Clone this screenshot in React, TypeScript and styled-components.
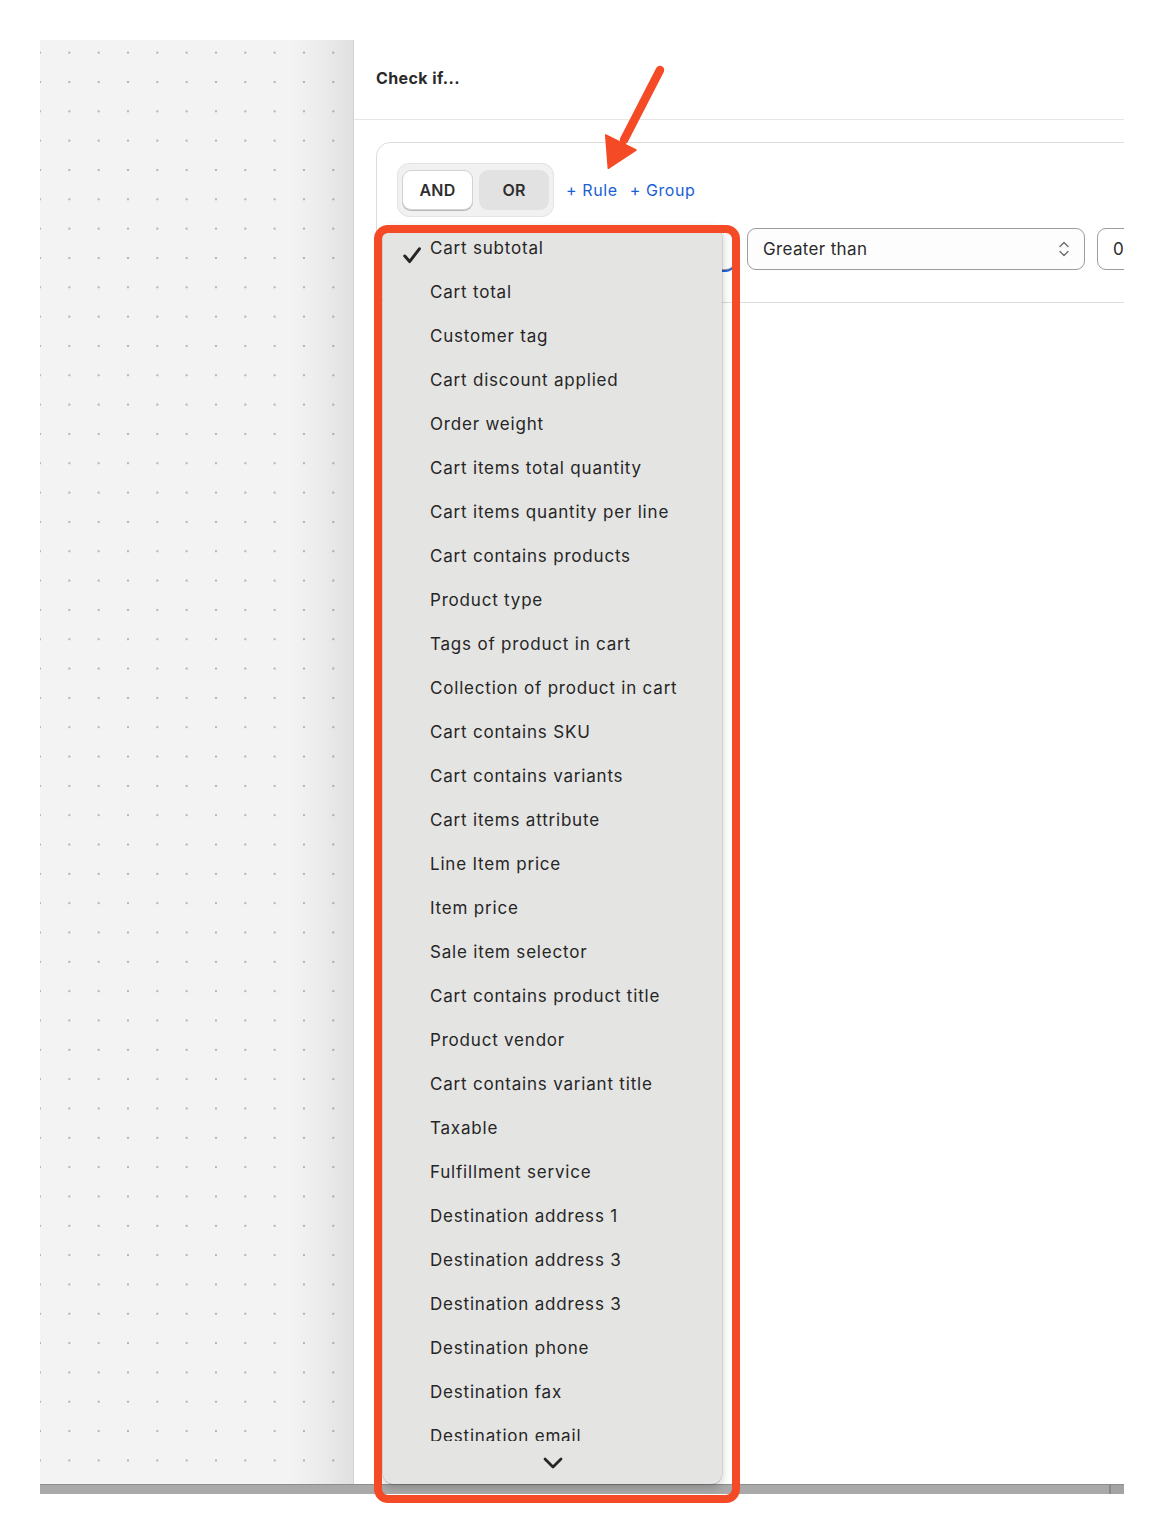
import React from 'react';
import styled, { createGlobalStyle } from 'styled-components';

const Global = createGlobalStyle`
  html, body { margin: 0; padding: 0; background: #ffffff; }
  body {
    font-family: Inter, "Noto Sans", "Liberation Sans", sans-serif;
    color: #2b2b2b;
    -webkit-font-smoothing: antialiased;
  }
`;

const Page = styled.div`
  padding: 40px;
`;

const Frame = styled.div`
  position: relative;
  width: 1084px;
  height: 1454px;
  display: flex;
  flex-direction: column;
`;

const Main = styled.div`
  flex: 1;
  display: flex;
  min-height: 0;
`;

const Canvas = styled.div`
  width: 313px;
  flex-shrink: 0;
  background-color: #f3f3f3;
  background-image:
    linear-gradient(to right, rgba(0, 0, 0, 0) 80%, rgba(0, 0, 0, 0.03) 90%, rgba(0, 0, 0, 0.08) 100%),
    radial-gradient(circle, #b3b3b3 0.95px, rgba(0, 0, 0, 0) 1.35px);
  background-size: 100% 100%, 29.33px 29.33px;
  background-position: 0 0, -14.67px -2px;
`;

const Panel = styled.div`
  flex: 1;
  min-width: 0;
  background: #ffffff;
  border-left: 1px solid #d2d2d2;
  overflow: hidden;
  display: flex;
  flex-direction: column;
`;

const Header = styled.div`
  height: 80px;
  flex-shrink: 0;
  display: flex;
  align-items: center;
  padding: 0 0 4px 22px;
  box-sizing: border-box;
  border-bottom: 1px solid #e6e6e6;
  font-size: 16px;
  font-weight: 700;
  letter-spacing: 0.4px;
  color: #2a2a2a;
`;

const Body = styled.div`
  padding: 22px 0 0 22px;
`;

const Card = styled.div`
  width: 900px;
  border: 1px solid #dcdcdc;
  border-radius: 14px;
  padding: 20px 20px 32px 20px;
  background: #ffffff;
`;

const Toolbar = styled.div`
  display: flex;
  align-items: center;
  gap: 12px;
`;

const Segmented = styled.div`
  display: flex;
  gap: 6px;
  padding: 6px 4px;
  height: 54px;
  box-sizing: border-box;
  background: #f1f1f1;
  border: 1px solid #e3e3e3;
  border-radius: 12px;
`;

const SegButton = styled.div<{ $active?: boolean }>`
  width: ${p => (p.$active ? 71 : 70)}px;
  height: 40px;
  box-sizing: border-box;
  display: flex;
  align-items: center;
  justify-content: center;
  font-size: 16px;
  font-weight: 600;
  letter-spacing: 0.2px;
  color: #2e2e2e;
  border-radius: 9px;
  background: ${p => (p.$active ? '#ffffff' : '#e2e2e2')};
  border: ${p => (p.$active ? '1px solid #d2d2d2' : '1px solid transparent')};
  box-shadow: ${p => (p.$active ? '0 1px 0 #b8b8b8' : 'none')};
`;

const LinkButton = styled.span`
  font-size: 16px;
  color: #1a5fd6;
  letter-spacing: 0.6px;
`;

const FieldRow = styled.div`
  display: flex;
  gap: 12px;
  margin-top: 11px;
`;

const Select = styled.div<{ $focused?: boolean }>`
  width: 338px;
  height: 42px;
  box-sizing: border-box;
  flex-shrink: 0;
  display: flex;
  align-items: center;
  justify-content: space-between;
  padding: 0 14px 0 15px;
  border: 1px solid #9c9c9c;
  border-radius: 9px;
  background: #fdfdfd;
  font-size: 17px;
  letter-spacing: 0.35px;
  color: #2b2b2b;
  box-shadow: ${p => (p.$focused ? '0 2px 0 #1f63d8, 0 -5px 0 -2px #e4e4e4' : 'none')};
`;

const NumberInput = styled.div`
  width: 120px;
  height: 42px;
  box-sizing: border-box;
  display: flex;
  align-items: center;
  padding-left: 15px;
  border: 1px solid #9c9c9c;
  border-radius: 9px;
  font-size: 17px;
  color: #2b2b2b;
`;

const ScrollBar = styled.div`
  height: 10px;
  flex-shrink: 0;
  display: flex;
  background: #a9a9a9;
  border-top: 1px solid #8d8d8d;
  box-sizing: border-box;
`;

const ScrollTrack = styled.div`
  flex: 1;
`;

const ScrollCorner = styled.div`
  width: 13px;
  border-left: 2px solid #8a8a8a;
  background: #a3a3a3;
`;

const Menu = styled.div`
  position: absolute;
  left: 343px;
  top: 186px;
  width: 339px;
  height: 1258px;
  background: #e4e4e3;
  border-radius: 10px;
  box-shadow: 0 0 0 0.5px rgba(0, 0, 0, 0.18), 0 3px 10px rgba(0, 0, 0, 0.22);
  display: flex;
  flex-direction: column;
  overflow: hidden;
  z-index: 2;
`;

const MenuList = styled.div`
  height: 1215px;
  overflow: hidden;
  flex-shrink: 0;
`;

const MenuItem = styled.div`
  height: 44px;
  display: grid;
  grid-template-columns: 47px 1fr;
  align-items: center;
  font-size: 17px;
  letter-spacing: 0.8px;
  color: #262626;
  white-space: nowrap;
`;

const CheckSlot = styled.div`
  display: flex;
  padding-left: 20px;
  padding-top: 14px;
`;

const MenuFooter = styled.div`
  flex: 1;
  display: flex;
  align-items: center;
  justify-content: center;
`;

const Highlight = styled.div`
  position: absolute;
  left: 334px;
  top: 185px;
  width: 366px;
  height: 1278px;
  box-sizing: border-box;
  border: 8px solid #f44a26;
  border-radius: 14px;
  z-index: 3;
  pointer-events: none;
`;

const ArrowSvg = styled.svg`
  position: absolute;
  left: 560px;
  top: 20px;
  z-index: 3;
`;

const items = [
  'Cart subtotal',
  'Cart total',
  'Customer tag',
  'Cart discount applied',
  'Order weight',
  'Cart items total quantity',
  'Cart items quantity per line',
  'Cart contains products',
  'Product type',
  'Tags of product in cart',
  'Collection of product in cart',
  'Cart contains SKU',
  'Cart contains variants',
  'Cart items attribute',
  'Line Item price',
  'Item price',
  'Sale item selector',
  'Cart contains product title',
  'Product vendor',
  'Cart contains variant title',
  'Taxable',
  'Fulfillment service',
  'Destination address 1',
  'Destination address 3',
  'Destination address 3',
  'Destination phone',
  'Destination fax',
  'Destination email',
];

const UpDown = () => (
  <svg width="12" height="18" viewBox="0 0 12 18" fill="none">
    <path d="M2 6.5 L6 2.5 L10 6.5" stroke="#6e6e6e" strokeWidth="1.4" strokeLinecap="round" strokeLinejoin="round" />
    <path d="M2 11.5 L6 15.5 L10 11.5" stroke="#6e6e6e" strokeWidth="1.4" strokeLinecap="round" strokeLinejoin="round" />
  </svg>
);

const Check = () => (
  <svg width="18" height="17" viewBox="0 0 18 17" fill="none">
    <path d="M1.8 9 L6.6 14.6 L16.4 1.8" stroke="#262626" strokeWidth="3" strokeLinecap="round" strokeLinejoin="round" />
  </svg>
);

const ChevronDown = () => (
  <svg width="20" height="12" viewBox="0 0 20 12" fill="none">
    <path d="M2 2 L10 10 L18 2" stroke="#262626" strokeWidth="2.8" strokeLinecap="round" strokeLinejoin="round" />
  </svg>
);

export default function App() {
  return (
    <>
      <Global />
      <Page>
        <Frame>
          <Main>
            <Canvas />
            <Panel>
              <Header>Check if...</Header>
              <Body>
                <Card>
                  <Toolbar>
                    <Segmented>
                      <SegButton $active>AND</SegButton>
                      <SegButton>OR</SegButton>
                    </Segmented>
                    <LinkButton>+ Rule</LinkButton>
                    <LinkButton>+ Group</LinkButton>
                  </Toolbar>
                  <FieldRow>
                    <Select $focused>
                      <span />
                      <UpDown />
                    </Select>
                    <Select>
                      <span>Greater than</span>
                      <UpDown />
                    </Select>
                    <NumberInput>0</NumberInput>
                  </FieldRow>
                </Card>
              </Body>
            </Panel>
          </Main>
          <ScrollBar>
            <ScrollTrack />
            <ScrollCorner />
          </ScrollBar>

          <Menu>
            <MenuList>
              {items.map((label, i) => (
                <MenuItem key={i}>
                  <CheckSlot>{i === 0 ? <Check /> : null}</CheckSlot>
                  <span>{label}</span>
                </MenuItem>
              ))}
            </MenuList>
            <MenuFooter>
              <ChevronDown />
            </MenuFooter>
          </Menu>

          <Highlight />

          <ArrowSvg width="80" height="120" viewBox="0 0 80 120">
            <path d="M60 10 L24 80" stroke="#f44a26" strokeWidth="8.5" strokeLinecap="round" />
            <polygon points="5.7,75 36,90 8.3,108.3" fill="#f44a26" stroke="#f44a26" strokeWidth="1.5" strokeLinejoin="round" />
          </ArrowSvg>
        </Frame>
      </Page>
    </>
  );
}
